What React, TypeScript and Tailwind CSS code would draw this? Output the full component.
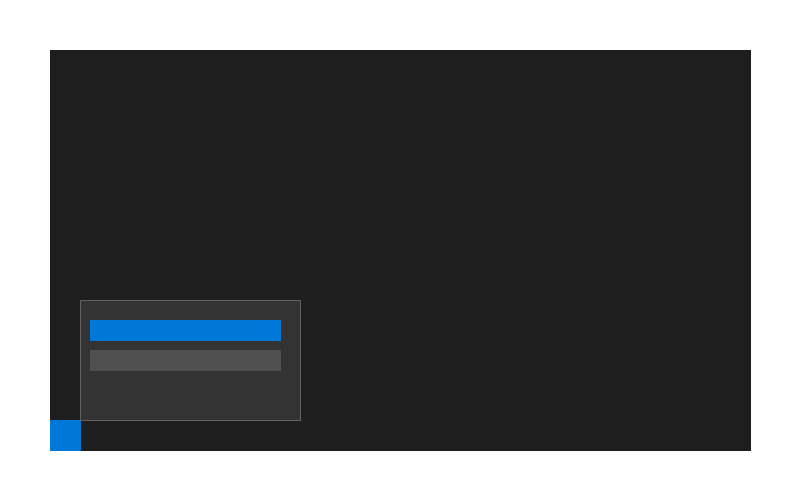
export default function App() {
    return (
        <div className="w-[800px] h-[500px] bg-white p-[50px]">
            <div className="relative w-[701px] h-[401px] bg-[#1e1e1e] flex flex-col justify-end">
                {/* popup menu */}
                <div className="absolute left-[30px] top-[250px] w-[221px] h-[121px] bg-[#333333] border border-[#626262] pt-[19px] pl-[9px] flex flex-col gap-[9px]">
                    <div className="w-[191px] h-[21px] bg-[#0078d7]" />
                    <div className="w-[191px] h-[21px] bg-[#505050]" />
                </div>
                <div className="w-[31px] h-[31px] bg-[#0078d7]" />
            </div>
        </div>
    );
}
